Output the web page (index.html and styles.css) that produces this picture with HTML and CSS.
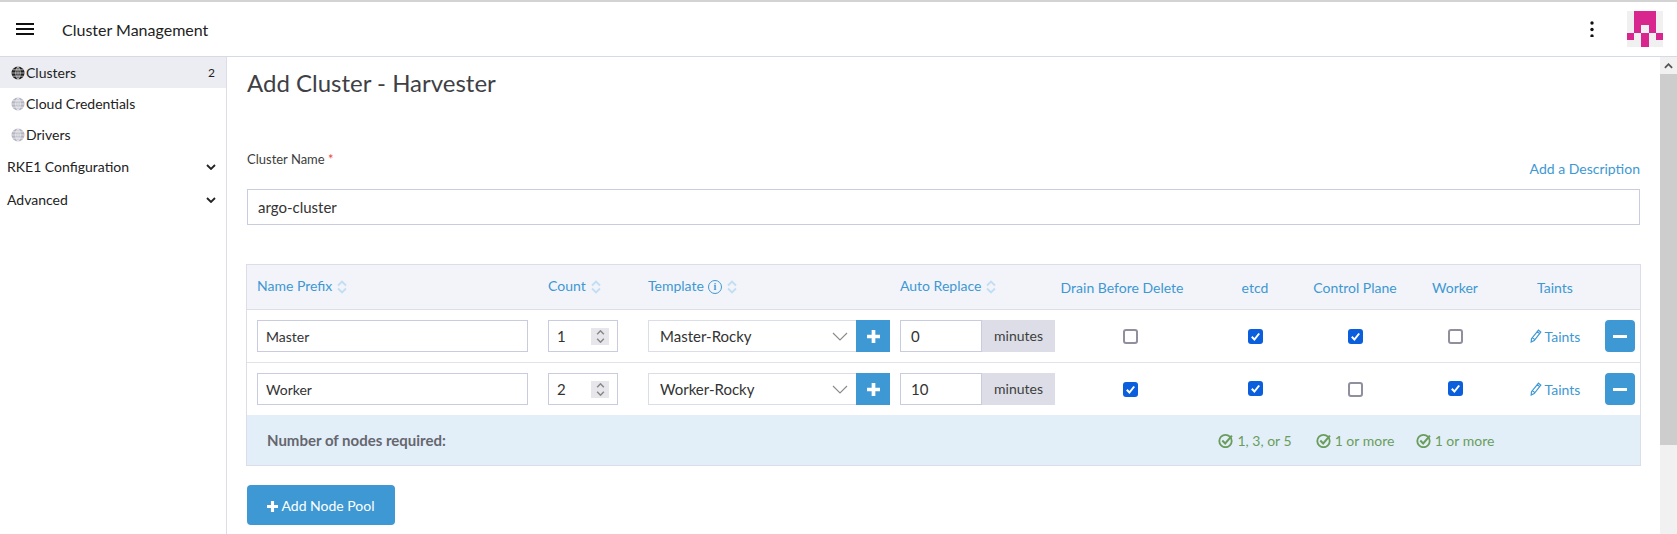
FILE: index.html
```html
<!DOCTYPE html>
<html>
<head>
  <title>Cluster Management</title>
  <link rel="stylesheet" href="styles.css">
</head>
<body>
  <svg class="defs" width="0" height="0">
    <symbol id="globe" viewBox="0 0 14 14">
      <circle cx="7" cy="7" r="6.500" fill="currentColor"/>
      <path d="M.5 7h13M2 3.800h10M2 10.200h10M7 .5v13M7 .5C4 4 4 10 7 13.500M7 .5c3 3.500 3 9.500 0 13" fill="none" stroke="#fff" stroke-width=".6"/>
    </symbol>
    <symbol id="sort" viewBox="0 0 10 14">
      <path d="M1 5.500 5 1.500l4 4M1 8.500l4 4 4-4" fill="none" stroke="currentColor" stroke-width="1.900"/>
    </symbol>
    <symbol id="chev" viewBox="0 0 10 6">
      <path d="M1 1l4 4 4-4" fill="none" stroke="currentColor" stroke-width="1.800"/>
    </symbol>
    <symbol id="plus" viewBox="0 0 12 12">
      <path d="M6 0v12M0 6h12" fill="none" stroke="currentColor" stroke-width="3.400"/>
    </symbol>
    <symbol id="pencil" viewBox="0 0 12 14">
      <path d="M8.500 1.200 10.800 3 4.200 11.500 1.200 13l.3-3.300zM7.300 2.800l2.300 1.800M2.500 8.800l2.300 1.800" fill="none" stroke="currentColor" stroke-width="1.200"/>
    </symbol>
    <symbol id="okay" viewBox="0 0 14 14">
      <circle cx="7" cy="7.500" r="5.800" fill="none" stroke="currentColor" stroke-width="1.700"/>
      <path d="M4 7l2.700 2.800L13 2.500" fill="none" stroke="currentColor" stroke-width="1.900"/>
    </symbol>
    <symbol id="tick" viewBox="0 0 11 11">
      <path d="M1.800 5.800 4.400 8.500 9.200 2.500" fill="none" stroke="#fff" stroke-width="2"/>
    </symbol>
  </svg>

  <header class="topbar">
    <svg class="burger" width="18" height="12" viewBox="0 0 18 12"><path d="M0 1h18M0 6h18M0 11h18" stroke="#111" stroke-width="2"/></svg>
    <span class="app-name">Cluster Management</span>
    <svg class="kebab" width="4" height="16" viewBox="0 0 4 16"><circle cx="2" cy="2" r="1.700"/><circle cx="2" cy="8.500" r="1.700"/><circle cx="2" cy="15" r="1.700"/></svg>
    <svg class="avatar" width="36" height="36" viewBox="0 0 5 5" shape-rendering="crispEdges">
      <rect width="5" height="5" fill="#f0f0f0"/>
      <path d="M1 0h3v2H3V2H2v1H1z" fill="#d9258e"/>
      <path d="M1 2h1v1H1zM3 2h1v1H3zM0 3h1v1H0zM2 3h1v2H2zM4 3h1v1H4z" fill="#d9258e"/>
    </svg>
  </header>

  <div class="layout">
    <nav class="sidebar">
      <a class="nav-item active"><svg class="globe"><use href="#globe"/></svg>Clusters<span class="count">2</span></a>
      <a class="nav-item"><svg class="globe"><use href="#globe"/></svg>Cloud Credentials</a>
      <a class="nav-item"><svg class="globe"><use href="#globe"/></svg>Drivers</a>
      <a class="nav-group">RKE1 Configuration<svg class="nav-chev"><use href="#chev"/></svg></a>
      <a class="nav-group">Advanced<svg class="nav-chev"><use href="#chev"/></svg></a>
    </nav>

    <main class="content">
      <h1>Add Cluster - Harvester</h1>

      <div class="name-head">
        <label>Cluster Name <span class="req">*</span></label>
        <a class="link">Add a Description</a>
      </div>
      <div class="field cluster-name">argo-cluster</div>

      <section class="pools">
        <div class="row head">
          <div class="th"><span>Name Prefix</span><svg class="sort"><use href="#sort"/></svg></div>
          <div class="th"><span>Count</span><svg class="sort"><use href="#sort"/></svg></div>
          <div class="th"><span>Template</span><span class="info">i</span><svg class="sort"><use href="#sort"/></svg></div>
          <div class="th"><span>Auto Replace</span><svg class="sort"><use href="#sort"/></svg></div>
          <div class="th mid drain">Drain Before Delete</div>
          <div class="th mid">etcd</div>
          <div class="th mid">Control Plane</div>
          <div class="th mid">Worker</div>
          <div class="th mid">Taints</div>
          <div></div>
        </div>

        <div class="row body">
          <div class="field name-field">Master</div>
          <div class="field count-field">1<span class="stepper"><svg><use href="#chev"/></svg><svg><use href="#chev"/></svg></span></div>
          <div class="template">
            <div class="field select">Master-Rocky<svg class="select-chev" viewBox="0 0 16 9"><path d="M1 1l7 7 7-7" fill="none" stroke="currentColor" stroke-width="1.100"/></svg></div>
            <button class="btn square"><svg class="plus"><use href="#plus"/></svg></button>
          </div>
          <div class="replace"><div class="field">0</div><span class="unit">minutes</span></div>
          <div class="mid"><span class="check"></span></div>
          <div class="mid"><span class="check on"><svg><use href="#tick"/></svg></span></div>
          <div class="mid"><span class="check on"><svg><use href="#tick"/></svg></span></div>
          <div class="mid"><span class="check"></span></div>
          <a class="link mid"><svg class="pencil"><use href="#pencil"/></svg>Taints</a>
          <button class="btn minus"><i></i></button>
        </div>

        <div class="row body">
          <div class="field name-field">Worker</div>
          <div class="field count-field">2<span class="stepper"><svg><use href="#chev"/></svg><svg><use href="#chev"/></svg></span></div>
          <div class="template">
            <div class="field select">Worker-Rocky<svg class="select-chev" viewBox="0 0 16 9"><path d="M1 1l7 7 7-7" fill="none" stroke="currentColor" stroke-width="1.100"/></svg></div>
            <button class="btn square"><svg class="plus"><use href="#plus"/></svg></button>
          </div>
          <div class="replace"><div class="field">10</div><span class="unit">minutes</span></div>
          <div class="mid"><span class="check on"><svg><use href="#tick"/></svg></span></div>
          <div class="mid"><span class="check on lift"><svg><use href="#tick"/></svg></span></div>
          <div class="mid"><span class="check"></span></div>
          <div class="mid"><span class="check on lift"><svg><use href="#tick"/></svg></span></div>
          <a class="link mid"><svg class="pencil"><use href="#pencil"/></svg>Taints</a>
          <button class="btn minus"><i></i></button>
        </div>

        <div class="row foot">
          <strong>Number of nodes required:</strong>
          <div class="ok"><svg><use href="#okay"/></svg>1, 3, or 5</div>
          <div class="ok"><svg><use href="#okay"/></svg>1 or more</div>
          <div class="ok"><svg><use href="#okay"/></svg>1 or more</div>
        </div>
      </section>

      <button class="btn add-pool"><svg class="plus"><use href="#plus"/></svg>Add Node Pool</button>
    </main>

    <div class="scrollbar">
      <div class="scroll-up"><svg viewBox="0 0 10 6"><path d="M1 5l4-4 4 4" fill="none" stroke="#555" stroke-width="2"/></svg></div>
      <div class="scroll-thumb"></div>
    </div>
  </div>
</body>
</html>
```

FILE: styles.css
```css
* {
  box-sizing: border-box;
}

html, body {
  height: 100%;
}

body {
  margin: 0;
  overflow: hidden;
  display: flex;
  flex-direction: column;
  background: #fff;
  color: #3d3d3d;
  font-family: Lato, "Open Sans", sans-serif;
  font-size: 14px;
}

.defs {
  position: absolute;
}

/* top bar */
.topbar {
  height: 57px;
  flex: none;
  display: flex;
  align-items: center;
  padding: 0 14px 0 16px;
  border-top: 2px solid #d3d3d3;
  border-bottom: 1px solid #d8d9e6;
}

.app-name {
  margin-left: 28px;
  font-size: 16px;
  color: #222;
}

.kebab {
  margin-left: auto;
  margin-right: 33px;
  fill: #111;
}

.avatar {
  display: block;
}

.layout {
  flex: 1;
  display: flex;
  min-height: 0;
}

/* sidebar */
.sidebar {
  width: 227px;
  flex: none;
  border-right: 1px solid #dcdde8;
  color: #222;
}

.nav-item {
  height: 31px;
  display: flex;
  align-items: center;
  padding: 0 11px 0 11px;
}

.nav-item.active {
  background: #ecedf3;
}

.globe {
  width: 14px;
  height: 14px;
  margin-right: 1px;
  color: #b5b6c2;
}

.active .globe {
  color: #222;
}

.count {
  margin-left: auto;
  font-size: 12px;
}

.nav-group {
  height: 33px;
  display: flex;
  align-items: center;
  justify-content: space-between;
  padding: 0 10px 0 7px;
}

.nav-chev {
  width: 10px;
  height: 6px;
}

/* main column */
.content {
  flex: 1;
  min-width: 0;
  padding: 0 20px;
}

h1 {
  margin: 10px 0 0;
  font-size: 24px;
  font-weight: 400;
  line-height: 32px;
  color: #3f3f46;
}

.name-head {
  display: flex;
  justify-content: space-between;
  margin-top: 52px;
  height: 38px;
  font-size: 13px;
}

.req {
  color: #e8473f;
}

.link {
  color: #3d98d3;
}

.name-head .link {
  margin-top: 9px;
  font-size: 14px;
}

.field {
  height: 32px;
  display: flex;
  align-items: center;
  padding: 0 10px;
  border: 1px solid #c9cbdf;
  background: #fff;
  font-size: 15px;
  color: #333;
}

.cluster-name {
  height: 36px;
}

/* node pools table */
.pools {
  margin: 39px -1px 0;
  border: 1px solid #dcdde8;
}

.row {
  display: grid;
  grid-template-columns: 291px 100px 252px 155px 150px 100px 100px 100px 100px 30px;
  align-items: center;
  padding: 0 5px 0 10px;
}

.head {
  height: 45px;
  background: #f3f4f9;
  border-bottom: 1px solid #dcdde8;
  color: #3d98d3;
}

.th {
  display: flex;
  align-items: center;
  padding-bottom: 4px;
}

.th.mid {
  justify-content: center;
  padding-bottom: 0;
}

.th.drain {
  padding-right: 16px;
}

.sort {
  width: 10px;
  height: 14px;
  margin: 3px 0 0 5px;
  color: #c2def4;
}

.info {
  width: 14px;
  height: 14px;
  margin: 3px 0 0 4px;
  border: 1.500px solid #3d98d3;
  border-radius: 50%;
  display: flex;
  align-items: center;
  justify-content: center;
  font: 700 10px "Liberation Serif", serif;
}

.body {
  height: 53px;
  border-bottom: 1px solid #e2e3ec;
}

.body:nth-child(3) {
  height: 52px;
  border-bottom: 0;
}

.name-field {
  width: 271px;
  padding-left: 8px;
  font-size: 14px;
}

.count-field {
  width: 70px;
  justify-content: space-between;
  padding: 0 8px;
}

.stepper {
  width: 18px;
  height: 17px;
  display: flex;
  flex-direction: column;
  align-items: center;
  justify-content: center;
  gap: 3px;
  background: #e6e6eb;
  color: #888;
}

.stepper svg {
  width: 9px;
  height: 5px;
}

.stepper svg:first-child {
  transform: scaleY(-1);
}

.template {
  display: flex;
  width: 242px;
}

.select {
  flex: 1;
  justify-content: space-between;
  padding: 0 8px 0 11px;
  border-color: #dcdee7;
  border-right: 0;
}

.select-chev {
  width: 16px;
  height: 9px;
  color: #8a8a8a;
}

.btn {
  border: 0;
  background: #3d98d3;
  color: #fff;
  font: inherit;
  display: flex;
  align-items: center;
  justify-content: center;
  padding: 0;
}

.square {
  width: 34px;
  height: 32px;
}

.plus {
  width: 13px;
  height: 13px;
}

.replace {
  display: flex;
}

.replace .field {
  width: 82px;
}

.unit {
  width: 73px;
  height: 32px;
  display: flex;
  align-items: center;
  justify-content: center;
  padding-bottom: 2px;
  background: #dcdde6;
}

.mid {
  display: flex;
  align-items: center;
  justify-content: center;
}

.check {
  width: 15px;
  height: 15px;
  border: 2px solid #8f8f9d;
  border-radius: 3px;
  display: block;
}

.check.on {
  border: 0;
  background: #0b5fdc;
  display: flex;
  align-items: center;
  justify-content: center;
}

.check.lift {
  margin-bottom: 2px;
}

.check svg {
  width: 11px;
  height: 11px;
}

.pencil {
  width: 12px;
  height: 14px;
  margin-right: 3px;
}

.minus {
  width: 30px;
  height: 32px;
  border-radius: 4px;
}

.minus i {
  width: 14px;
  height: 3px;
  background: #fff;
}

.foot {
  height: 50px;
  background: #e2eff9;
  color: #6a9d5b;
}

.foot strong {
  grid-column: 1 / 6;
  padding-left: 10px;
  font-size: 15px;
  color: #66666e;
}

.ok {
  display: flex;
  align-items: center;
  justify-content: center;
}

.ok svg {
  width: 15px;
  height: 15px;
  margin-right: 4px;
}

.add-pool {
  width: 148px;
  height: 40px;
  margin-top: 19px;
  border-radius: 4px;
  gap: 3px;
}

.add-pool .plus {
  width: 11px;
  height: 11px;
  margin-top: 2px;
}

/* page scrollbar */
.scrollbar {
  width: 17px;
  flex: none;
  background: #f1f1f1;
}

.scroll-up {
  height: 17px;
  display: flex;
  align-items: center;
  justify-content: center;
}

.scroll-up svg {
  width: 9px;
  height: 6px;
}

.scroll-thumb {
  height: 371px;
  background: #cdcdcd;
}
```
